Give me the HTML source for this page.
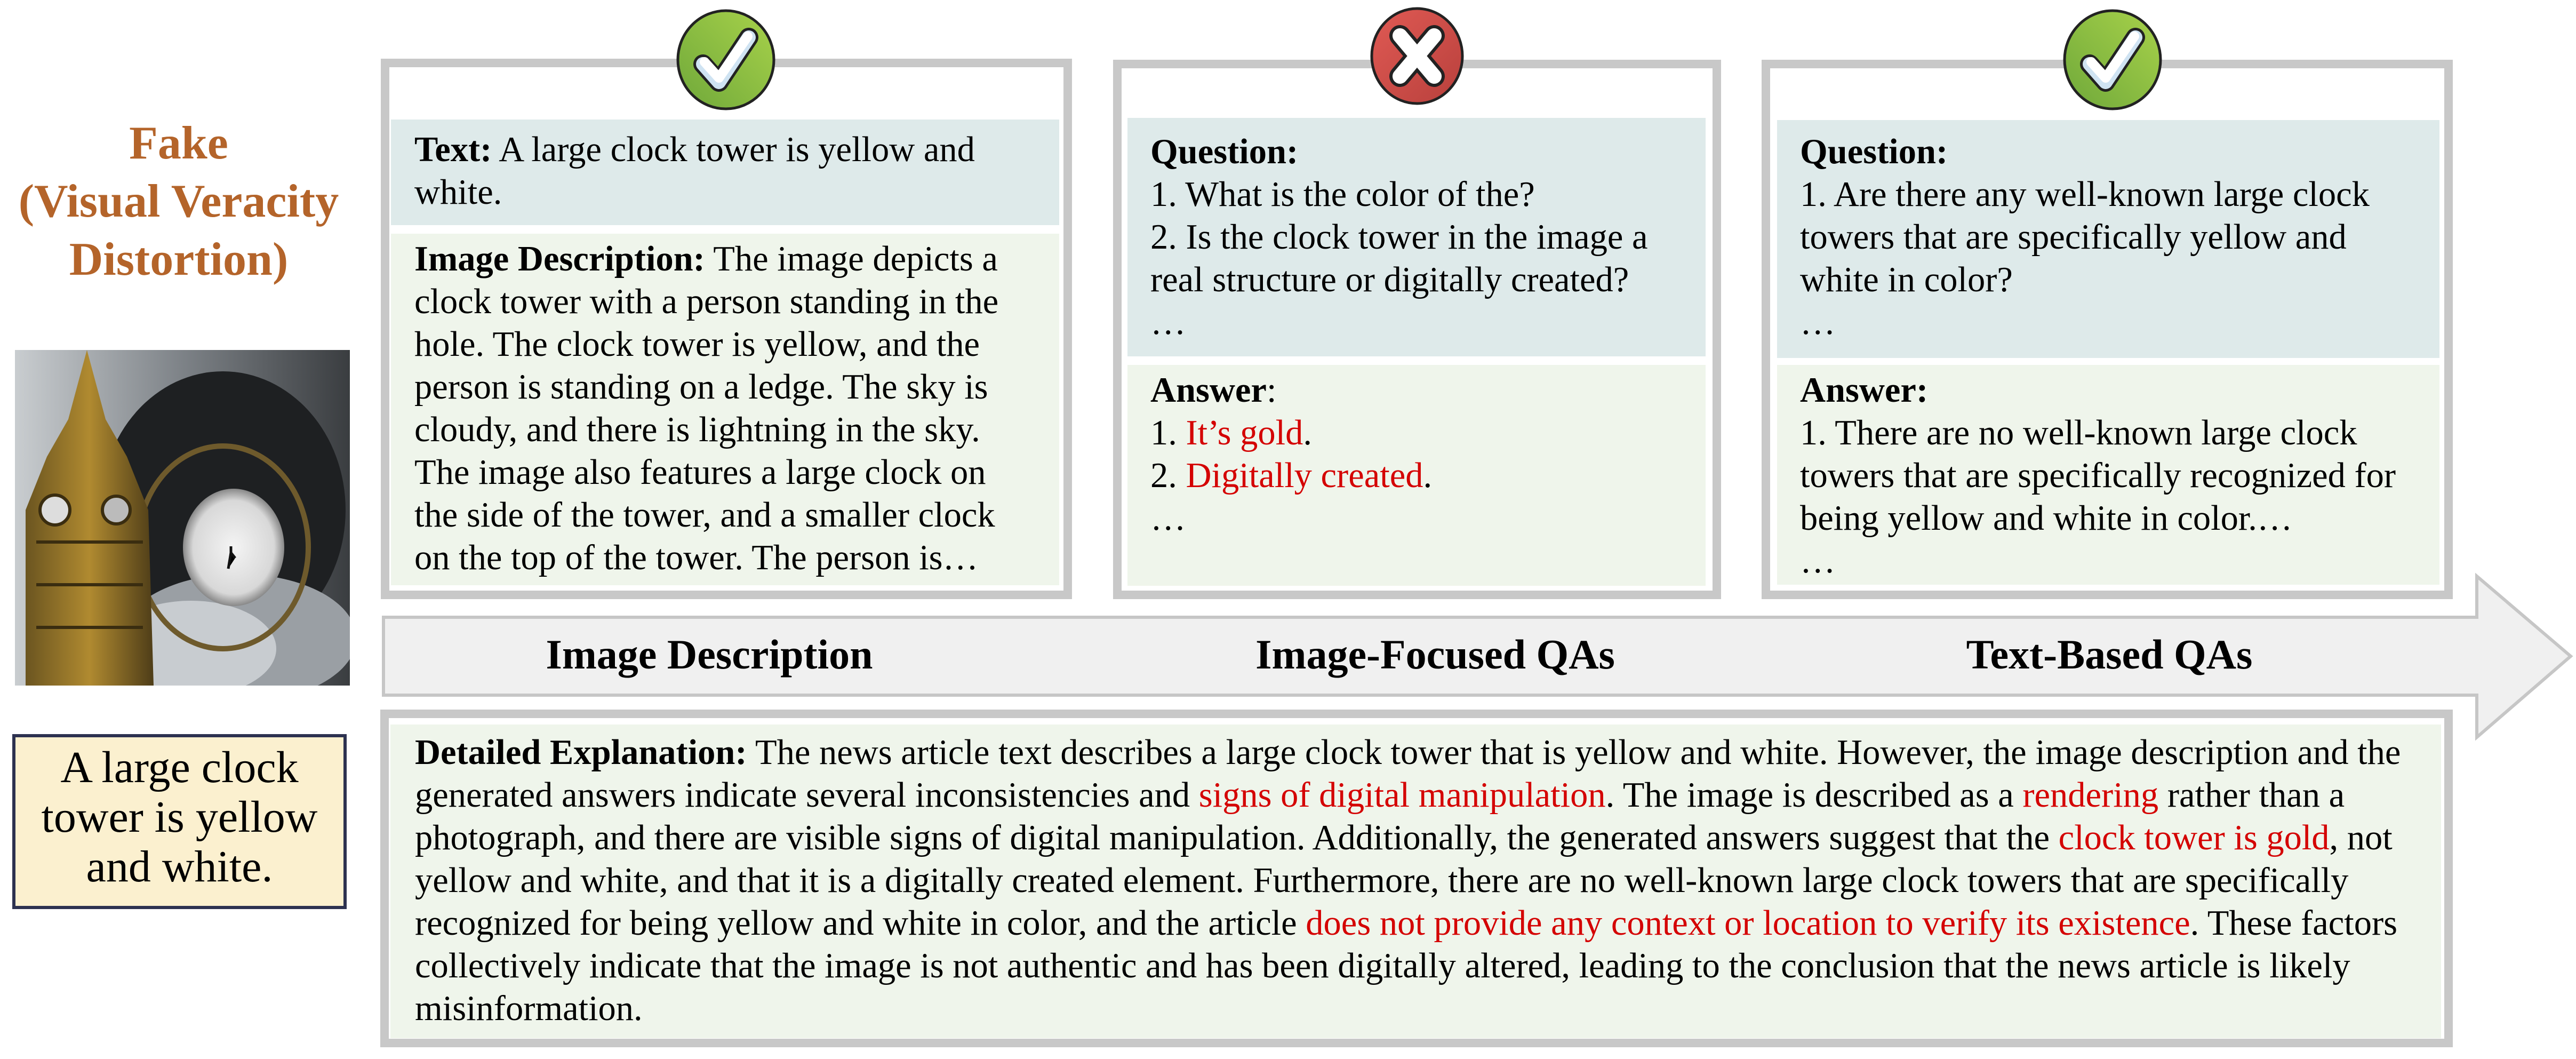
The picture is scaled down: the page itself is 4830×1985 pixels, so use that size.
<!DOCTYPE html>
<html><head><meta charset="utf-8"><style>
*{margin:0;padding:0;box-sizing:border-box}
body{width:4830px;height:1985px;background:#fff;position:relative;overflow:hidden;font-family:"Liberation Serif","Times New Roman",serif;color:#000}
.abs{position:absolute}
.box{position:absolute;border:16px solid #c8c8c8;background:#fff}
.blue{position:absolute;background:#deeaea}
.green{position:absolute;background:#eff5eb}
.t{position:absolute;font-size:66.5px;line-height:80px;white-space:nowrap}
.r{color:#d40000}
b{font-weight:bold}
.lab{position:absolute;font-size:78px;font-weight:bold;line-height:100px;white-space:nowrap;transform:translateX(-50%)}
</style></head><body>

<div class="abs" style="left:0;width:670px;top:214px;text-align:center;font-size:88px;font-weight:bold;line-height:109px;color:#b4642a;white-space:nowrap">Fake<br>(Visual Veracity<br>Distortion)</div>

<svg class="abs" style="left:28px;top:656px" width="628" height="629" viewBox="0 0 628 629">
<defs>
<linearGradient id="sky" x1="0" y1="0" x2="1" y2="0"><stop offset="0" stop-color="#c9cdd0"/><stop offset="0.5" stop-color="#7d8287"/><stop offset="1" stop-color="#3a3d40"/></linearGradient>
<linearGradient id="tw" x1="0" y1="0" x2="1" y2="0"><stop offset="0" stop-color="#6b5520"/><stop offset="0.5" stop-color="#b08a30"/><stop offset="1" stop-color="#4e3d18"/></linearGradient>
<radialGradient id="hole" cx="0.5" cy="0.5" r="0.5"><stop offset="0" stop-color="#f4f4f4"/><stop offset="0.8" stop-color="#d8d8d8"/><stop offset="1" stop-color="#888"/></radialGradient>
</defs>
<rect width="628" height="629" fill="url(#sky)"/>
<ellipse cx="390" cy="300" rx="230" ry="260" fill="#1e2022"/>
<ellipse cx="420" cy="540" rx="220" ry="120" fill="#9a9fa4"/>
<ellipse cx="330" cy="560" rx="160" ry="90" fill="#c8ccd0"/>
<ellipse cx="390" cy="370" rx="160" ry="190" fill="none" stroke="#6e5a2c" stroke-width="10"/>
<ellipse cx="410" cy="370" rx="95" ry="110" fill="url(#hole)"/>
<path d="M20 629 L20 300 L60 200 L100 130 L135 0 L170 130 L210 200 L250 300 L260 629 Z" fill="url(#tw)"/>
<circle cx="75" cy="300" r="28" fill="#ddd" stroke="#3a2d10" stroke-width="6"/>
<circle cx="190" cy="300" r="26" fill="#bbb" stroke="#3a2d10" stroke-width="6"/>
<path d="M40 360 L240 360 M40 440 L240 440 M40 520 L240 520" stroke="#3a2d10" stroke-width="6"/>
<path d="M400 410 l5 -30 l8 10 M405 380 l0 -12" stroke="#111" stroke-width="5"/>
</svg>

<div class="abs" style="left:23px;top:1376px;width:627px;height:328px;background:#fbf0cf;border:6px solid #2d3250"></div>
<div class="abs" style="left:23px;top:1392px;width:627px;text-align:center;font-size:84px;line-height:93px;white-space:nowrap">A large clock<br>tower is yellow<br>and white.</div>

<!-- Arrow -->
<svg class="abs" style="left:0;top:0" width="4830" height="1985">
<path d="M719 1157 L4644 1157 L4644 1080 L4820 1230 L4644 1382 L4644 1303 L719 1303 Z" fill="#f0f0f0" stroke="#c6c6c6" stroke-width="6"/>
</svg>
<div class="lab" style="left:1330px;top:1177px">Image Description</div>
<div class="lab" style="left:2691px;top:1177px">Image-Focused QAs</div>
<div class="lab" style="left:3955px;top:1177px">Text-Based QAs</div>

<!-- Box1 -->
<div class="box" style="left:714px;top:110px;width:1296px;height:1013px"></div>
<div class="blue" style="left:733px;top:224px;width:1253px;height:198px"></div>
<div class="green" style="left:733px;top:438px;width:1253px;height:659px"></div>
<div class="t" style="left:777px;top:241px"><b>Text:</b> A large clock tower is yellow and<br>white.</div>
<div class="t" style="left:777px;top:446px"><b>Image Description:</b> The image depicts a<br>clock tower with a person standing in the<br>hole. The clock tower is yellow, and the<br>person is standing on a ledge. The sky is<br>cloudy, and there is lightning in the sky.<br>The image also features a large clock on<br>the side of the tower, and a smaller clock<br>on the top of the tower. The person is…</div>

<!-- Box2 -->
<div class="box" style="left:2087px;top:112px;width:1140px;height:1011px"></div>
<div class="blue" style="left:2114px;top:221px;width:1084px;height:447px"></div>
<div class="green" style="left:2114px;top:684px;width:1084px;height:414px"></div>
<div class="t" style="left:2157px;top:245px"><b>Question:</b><br>1. What is the color of the?<br>2. Is the clock tower in the image a<br>real structure or digitally created?<br>…</div>
<div class="t" style="left:2157px;top:692px"><b>Answer</b>:<br>1. <span class="r">It’s gold</span>.<br>2. <span class="r">Digitally created</span>.<br>…</div>

<!-- Box3 -->
<div class="box" style="left:3303px;top:112px;width:1296px;height:1011px"></div>
<div class="blue" style="left:3332px;top:225px;width:1242px;height:446px"></div>
<div class="green" style="left:3332px;top:684px;width:1242px;height:412px"></div>
<div class="t" style="left:3375px;top:245px"><b>Question:</b><br>1. Are there any well-known large clock<br>towers that are specifically yellow and<br>white in color?<br>…</div>
<div class="t" style="left:3375px;top:692px"><b>Answer:</b><br>1. There are no well-known large clock<br>towers that are specifically recognized for<br>being yellow and white in color.…<br>…</div>

<!-- Bottom -->
<div class="box" style="left:713px;top:1330px;width:3886px;height:633px"></div>
<div class="green" style="left:732px;top:1358px;width:3845px;height:588px"></div>
<div class="t" style="left:778px;top:1371px"><b>Detailed Explanation:</b> The news article text describes a large clock tower that is yellow and white. However, the image description and the<br>generated answers indicate several inconsistencies and <span class="r">signs of digital manipulation</span>. The image is described as a <span class="r">rendering</span> rather than a<br>photograph, and there are visible signs of digital manipulation. Additionally, the generated answers suggest that the <span class="r">clock tower is gold</span>, not<br>yellow and white, and that it is a digitally created element. Furthermore, there are no well-known large clock towers that are specifically<br>recognized for being yellow and white in color, and the article <span class="r">does not provide any context or location to verify its existence</span>. These factors<br>collectively indicate that the image is not authentic and has been digitally altered, leading to the conclusion that the news article is likely<br>misinformation.</div>

<!-- Icons -->
<svg class="abs" style="left:1266px;top:16px" width="190" height="192" viewBox="0 0 190 192">
<defs><linearGradient id="g1" x1="0" y1="1" x2="1" y2="0"><stop offset="0" stop-color="#6fa83a"/><stop offset="1" stop-color="#a8d24a"/></linearGradient></defs>
<ellipse cx="95" cy="96" rx="90" ry="92" fill="url(#g1)" stroke="#222" stroke-width="5"/>
<path d="M52 104 L82 138 L138 54" fill="none" stroke="#222" stroke-width="36" stroke-linecap="round" stroke-linejoin="round"/>
<path d="M52 104 L82 138 L138 54" fill="none" stroke="#cfe3f2" stroke-width="26" stroke-linecap="round" stroke-linejoin="round"/>
<path d="M55 100 L82 130 L136 52" fill="none" stroke="#fff" stroke-width="18" stroke-linecap="round" stroke-linejoin="round"/>
</svg>
<svg class="abs" style="left:3866px;top:16px" width="190" height="192" viewBox="0 0 190 192">
<ellipse cx="95" cy="96" rx="90" ry="92" fill="url(#g1)" stroke="#222" stroke-width="5"/>
<path d="M52 104 L82 138 L138 54" fill="none" stroke="#222" stroke-width="36" stroke-linecap="round" stroke-linejoin="round"/>
<path d="M52 104 L82 138 L138 54" fill="none" stroke="#cfe3f2" stroke-width="26" stroke-linecap="round" stroke-linejoin="round"/>
<path d="M55 100 L82 130 L136 52" fill="none" stroke="#fff" stroke-width="18" stroke-linecap="round" stroke-linejoin="round"/>
</svg>
<svg class="abs" style="left:2567px;top:12px" width="180" height="186" viewBox="0 0 180 186">
<defs><linearGradient id="g2" x1="0" y1="0" x2="1" y2="1"><stop offset="0" stop-color="#e05a54"/><stop offset="1" stop-color="#b8403c"/></linearGradient></defs>
<ellipse cx="90" cy="93" rx="85" ry="89" fill="url(#g2)" stroke="#222" stroke-width="5"/>
<path d="M58 55 L122 131 M122 55 L58 131" fill="none" stroke="#222" stroke-width="40" stroke-linecap="round"/>
<path d="M58 55 L122 131 M122 55 L58 131" fill="none" stroke="#fff" stroke-width="28" stroke-linecap="round"/>
</svg>

</body></html>
